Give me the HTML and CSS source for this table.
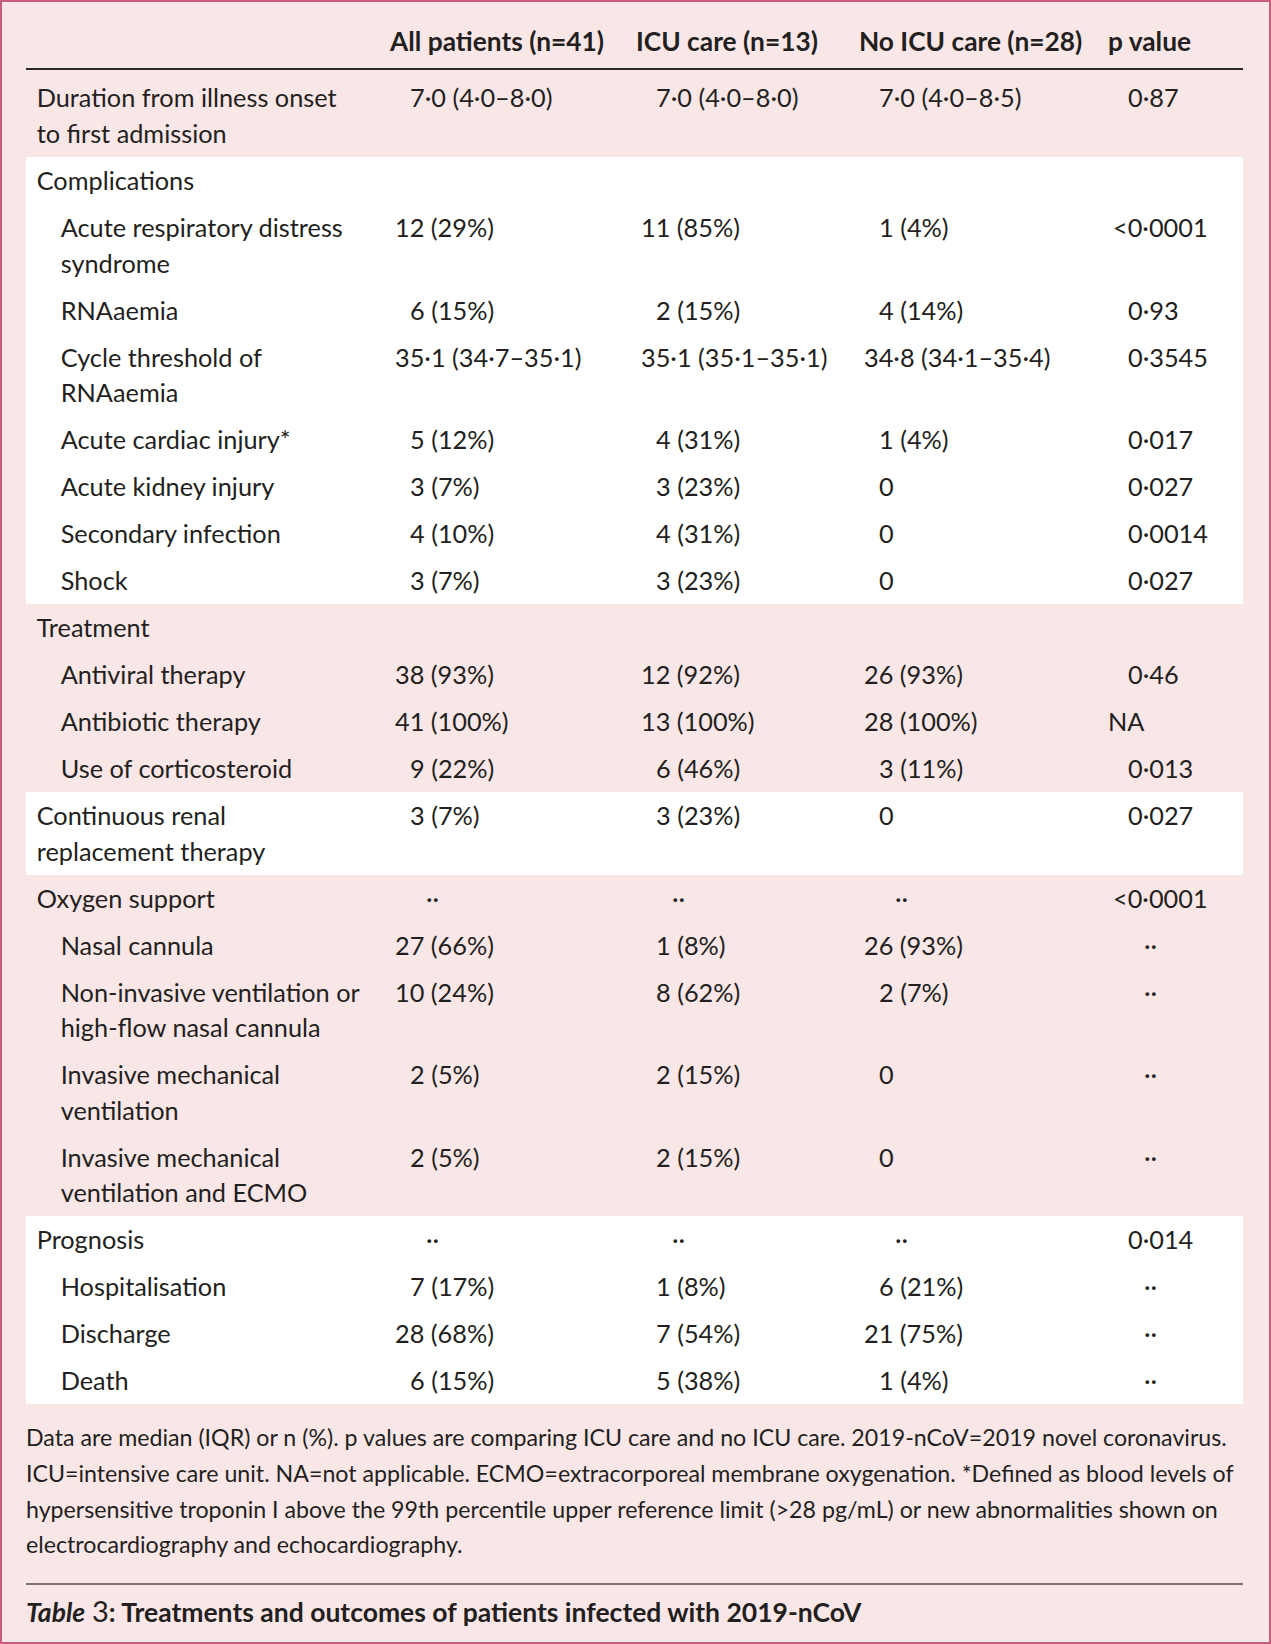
FILE: index.html
```html
<!DOCTYPE html>
<html lang="en">
<head>
<meta charset="utf-8">
<title>Table 3: Treatments and outcomes of patients infected with 2019-nCoV</title>
<link rel="stylesheet" href="styles.css">
</head>
<body>
<div class="page">
  <table class="data">
    <colgroup>
      <col class="col-label">
      <col class="col-all">
      <col class="col-icu">
      <col class="col-noicu">
      <col class="col-p">
    </colgroup>
    <thead>
      <tr>
        <th class="lab"></th>
        <th>All patients (n=41)</th>
        <th>ICU care (n=13)</th>
        <th>No ICU care (n=28)</th>
        <th>p value</th>
      </tr>
    </thead>
    <tbody class="pink first">
      <tr>
        <td class="lab">Duration from illness onset<br>to first admission</td>
        <td class="v">7·0 (4·0–8·0)</td>
        <td class="v">7·0 (4·0–8·0)</td>
        <td class="v">7·0 (4·0–8·5)</td>
        <td class="v">0·87</td>
      </tr>
    </tbody>
    <tbody class="white">
      <tr>
        <td class="lab">Complications</td>
        <td></td><td></td><td></td><td></td>
      </tr>
      <tr>
        <td class="lab sub">Acute respiratory distress<br>syndrome</td>
        <td class="v2">12 (29%)</td>
        <td class="v2">11 (85%)</td>
        <td class="v">1 (4%)</td>
        <td class="v2">&lt;0·0001</td>
      </tr>
      <tr>
        <td class="lab sub">RNAaemia</td>
        <td class="v">6 (15%)</td>
        <td class="v">2 (15%)</td>
        <td class="v">4 (14%)</td>
        <td class="v">0·93</td>
      </tr>
      <tr>
        <td class="lab sub">Cycle threshold of<br>RNAaemia</td>
        <td class="v2">35·1 (34·7–35·1)</td>
        <td class="v2">35·1 (35·1–35·1)</td>
        <td class="v2">34·8 (34·1–35·4)</td>
        <td class="v">0·3545</td>
      </tr>
      <tr>
        <td class="lab sub">Acute cardiac injury*</td>
        <td class="v">5 (12%)</td>
        <td class="v">4 (31%)</td>
        <td class="v">1 (4%)</td>
        <td class="v">0·017</td>
      </tr>
      <tr>
        <td class="lab sub">Acute kidney injury</td>
        <td class="v">3 (7%)</td>
        <td class="v">3 (23%)</td>
        <td class="v">0</td>
        <td class="v">0·027</td>
      </tr>
      <tr>
        <td class="lab sub">Secondary infection</td>
        <td class="v">4 (10%)</td>
        <td class="v">4 (31%)</td>
        <td class="v">0</td>
        <td class="v">0·0014</td>
      </tr>
      <tr>
        <td class="lab sub">Shock</td>
        <td class="v">3 (7%)</td>
        <td class="v">3 (23%)</td>
        <td class="v">0</td>
        <td class="v">0·027</td>
      </tr>
    </tbody>
    <tbody class="pink">
      <tr>
        <td class="lab">Treatment</td>
        <td></td><td></td><td></td><td></td>
      </tr>
      <tr>
        <td class="lab sub">Antiviral therapy</td>
        <td class="v2">38 (93%)</td>
        <td class="v2">12 (92%)</td>
        <td class="v2">26 (93%)</td>
        <td class="v">0·46</td>
      </tr>
      <tr>
        <td class="lab sub">Antibiotic therapy</td>
        <td class="v2">41 (100%)</td>
        <td class="v2">13 (100%)</td>
        <td class="v2">28 (100%)</td>
        <td class="na">NA</td>
      </tr>
      <tr>
        <td class="lab sub">Use of corticosteroid</td>
        <td class="v">9 (22%)</td>
        <td class="v">6 (46%)</td>
        <td class="v">3 (11%)</td>
        <td class="v">0·013</td>
      </tr>
    </tbody>
    <tbody class="white">
      <tr>
        <td class="lab">Continuous renal<br>replacement therapy</td>
        <td class="v">3 (7%)</td>
        <td class="v">3 (23%)</td>
        <td class="v">0</td>
        <td class="v">0·027</td>
      </tr>
    </tbody>
    <tbody class="pink">
      <tr>
        <td class="lab">Oxygen support</td>
        <td class="dd">··</td>
        <td class="dd">··</td>
        <td class="dd">··</td>
        <td class="v2">&lt;0·0001</td>
      </tr>
      <tr>
        <td class="lab sub">Nasal cannula</td>
        <td class="v2">27 (66%)</td>
        <td class="v">1 (8%)</td>
        <td class="v2">26 (93%)</td>
        <td class="dd">··</td>
      </tr>
      <tr>
        <td class="lab sub">Non-invasive ventilation or<br>high-flow nasal cannula</td>
        <td class="v2">10 (24%)</td>
        <td class="v">8 (62%)</td>
        <td class="v">2 (7%)</td>
        <td class="dd">··</td>
      </tr>
      <tr>
        <td class="lab sub">Invasive mechanical<br>ventilation</td>
        <td class="v">2 (5%)</td>
        <td class="v">2 (15%)</td>
        <td class="v">0</td>
        <td class="dd">··</td>
      </tr>
      <tr>
        <td class="lab sub">Invasive mechanical<br>ventilation and ECMO</td>
        <td class="v">2 (5%)</td>
        <td class="v">2 (15%)</td>
        <td class="v">0</td>
        <td class="dd">··</td>
      </tr>
    </tbody>
    <tbody class="white">
      <tr>
        <td class="lab">Prognosis</td>
        <td class="dd">··</td>
        <td class="dd">··</td>
        <td class="dd">··</td>
        <td class="v">0·014</td>
      </tr>
      <tr>
        <td class="lab sub">Hospitalisation</td>
        <td class="v">7 (17%)</td>
        <td class="v">1 (8%)</td>
        <td class="v">6 (21%)</td>
        <td class="dd">··</td>
      </tr>
      <tr>
        <td class="lab sub">Discharge</td>
        <td class="v2">28 (68%)</td>
        <td class="v">7 (54%)</td>
        <td class="v2">21 (75%)</td>
        <td class="dd">··</td>
      </tr>
      <tr>
        <td class="lab sub">Death</td>
        <td class="v">6 (15%)</td>
        <td class="v">5 (38%)</td>
        <td class="v">1 (4%)</td>
        <td class="dd">··</td>
      </tr>
    </tbody>
  </table>

  <p class="note">Data are median (IQR) or n (%). p values are comparing ICU care and no ICU care. 2019-nCoV=2019 novel coronavirus.<br>ICU=intensive care unit. NA=not applicable. ECMO=extracorporeal membrane oxygenation. *Defined as blood levels of<br>hypersensitive troponin I above the 99th percentile upper reference limit (&gt;28 pg/mL) or new abnormalities shown on<br>electrocardiography and echocardiography.</p>

  <p class="caption"><em class="cap-table">Table</em> <span class="cap-num">3</span><strong>: Treatments and outcomes of patients infected with 2019-nCoV</strong></p>
</div>
</body>
</html>
```

FILE: styles.css
```css
html, body {
  margin: 0;
  padding: 0;
  background: #f9e6e7;
}

.page {
  box-sizing: border-box;
  width: 1271px;
  height: 1644px;
  border: 2px solid #c95b7d;
  padding: 0 26px 0 24px;
  background: #f9e6e7;
  color: #231f20;
  font-family: Lato, "Open Sans", sans-serif;
  font-size: 25.3px;
  line-height: 35.5px;
}

.data {
  width: 1217px;
  table-layout: fixed;
  border-collapse: collapse;
  border-spacing: 0;
}

.col-label { width: 364px; }
.col-all { width: 246px; }
.col-icu { width: 223px; }
.col-noicu { width: 249px; }
.col-p { width: 135px; }

.data th {
  text-align: left;
  font-size: 26.3px;
  font-weight: 700;
  padding: 22px 0 8px 0;
  border-bottom: 2px solid #2b2627;
  white-space: nowrap;
}

.data td {
  padding: 5.75px 0;
  vertical-align: top;
  white-space: nowrap;
  text-align: left;
}

.pink td { background: #f9e6e7; }
.white td { background: #ffffff; }

.first td {
  padding-top: 10.8px;
  padding-bottom: 6.2px;
}

.data td.lab { padding-left: 10.7px; }
.data td.lab.sub { padding-left: 34.7px; }

.data td.v { padding-left: 20px; }
.data td.v2 { padding-left: 5px; }
.data td.dd { padding-left: 36px; }
.data td.na { padding-left: 0; }

.note {
  margin: 16px 0 0 0;
  font-size: 23.2px;
  line-height: 35.6px;
  white-space: nowrap;
}

.caption {
  margin: 20px 0 0 0;
  padding-top: 8px;
  border-top: 2px solid #7a7172;
  font-size: 26.5px;
  line-height: 35.5px;
  white-space: nowrap;
}

.cap-table {
  font-style: italic;
  font-weight: 700;
}

.cap-num {
  font-weight: 400;
  font-size: 29px;
}

.caption strong {
  font-weight: 700;
}
```
